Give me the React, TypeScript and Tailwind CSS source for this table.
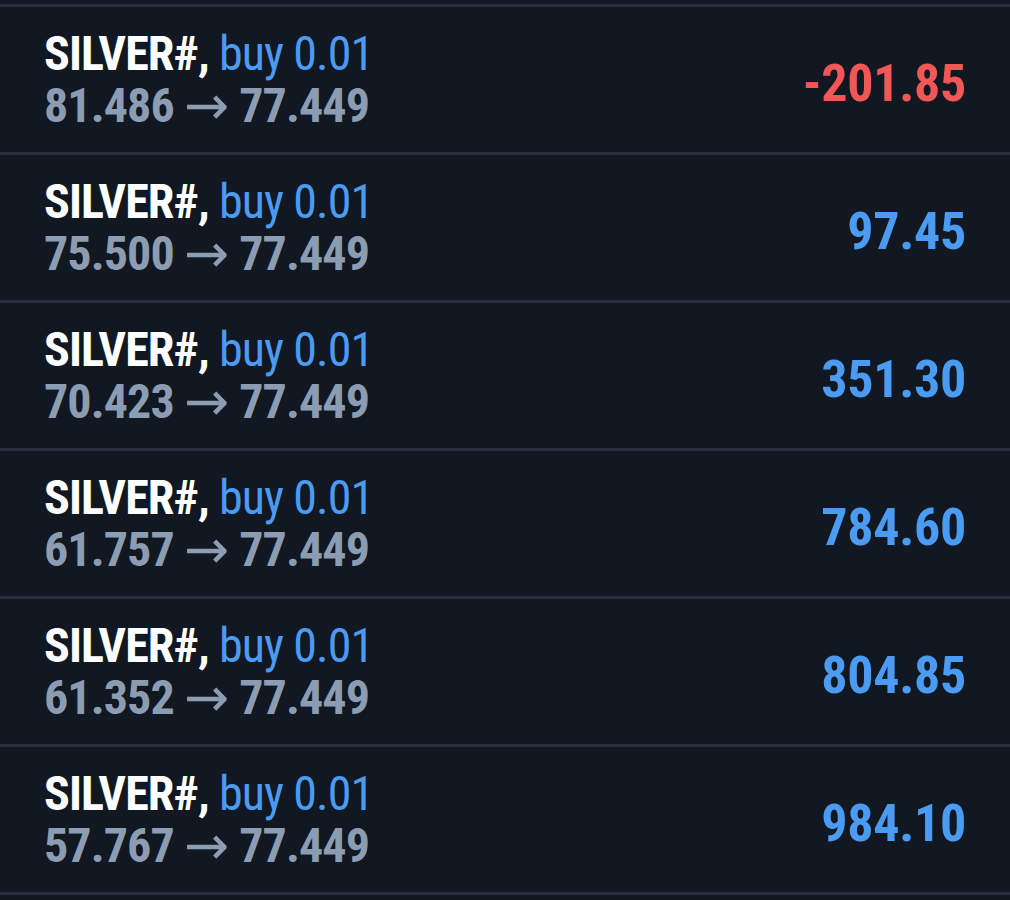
import React from 'react';

interface Position {
  symbol: string;
  side: string;
  volume: string;
  open: string;
  current: string;
  profit: number;
}

const positions: Position[] = [
  { symbol: 'SILVER#', side: 'buy', volume: '0.01', open: '81.486', current: '77.449', profit: -201.85 },
  { symbol: 'SILVER#', side: 'buy', volume: '0.01', open: '75.500', current: '77.449', profit: 97.45 },
  { symbol: 'SILVER#', side: 'buy', volume: '0.01', open: '70.423', current: '77.449', profit: 351.3 },
  { symbol: 'SILVER#', side: 'buy', volume: '0.01', open: '61.757', current: '77.449', profit: 784.6 },
  { symbol: 'SILVER#', side: 'buy', volume: '0.01', open: '61.352', current: '77.449', profit: 804.85 },
  { symbol: 'SILVER#', side: 'buy', volume: '0.01', open: '57.767', current: '77.449', profit: 984.1 },
];

const font = "font-['Roboto_Condensed','Roboto',sans-serif]";

export default function App() {
  return (
    <div className={`w-[1010px] h-[900px] bg-[#111821] pt-[4px] overflow-hidden ${font}`}>
      {positions.map((p, i) => (
        <div
          key={i}
          className={`h-[148px] border-t-[3px] border-[#28313d] flex items-center justify-between pl-[44px] pr-[44px] ${
            i === positions.length - 1 ? 'border-b-[3px] h-[151px]' : ''
          }`}
        >
          <div className="flex flex-col leading-[52px] text-[48px] tracking-[-0.9px]">
            <div className="whitespace-nowrap">
              <span className="font-bold text-white">{p.symbol},</span>{' '}
              <span className="text-[#4b9bf2]">
                {p.side} {p.volume}
              </span>
            </div>
            <div className="font-bold text-[#8c9db3] whitespace-nowrap flex items-center h-[52px]">
              <span className="w-[128px]">{p.open}</span>
              <span className="font-['DejaVu_Sans',sans-serif] font-normal text-[54px] leading-[40px] ml-[12px] mr-[10px] tracking-normal">
                →
              </span>
              <span>{p.current}</span>
            </div>
          </div>
          <div
            className={`mt-[8px] text-[52px] font-bold tracking-[-0.3px] ${
              p.profit < 0 ? 'text-[#f25757]' : 'text-[#4b9bf2]'
            }`}
          >
            {p.profit.toFixed(2)}
          </div>
        </div>
      ))}
    </div>
  );
}
